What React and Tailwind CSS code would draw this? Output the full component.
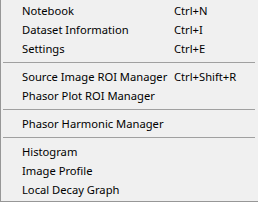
import React from 'react';

const groups = [
  [
    { label: 'Notebook', shortcut: 'Ctrl+N' },
    { label: 'Dataset Information', shortcut: 'Ctrl+I' },
    { label: 'Settings', shortcut: 'Ctrl+E' },
  ],
  [
    { label: 'Source Image ROI Manager', shortcut: 'Ctrl+Shift+R' },
    { label: 'Phasor Plot ROI Manager' },
  ],
  [{ label: 'Phasor Harmonic Manager' }],
  [
    { label: 'Histogram' },
    { label: 'Image Profile' },
    { label: 'Local Decay Graph' },
  ],
];

const MenuItem = ({ label, shortcut }) => (
  <div className="flex h-[19px] items-center pl-[21px] leading-[19px] whitespace-nowrap">
    <span className="w-[152px] shrink-0">{label}</span>
    {shortcut && <span>{shortcut}</span>}
  </div>
);

const Separator = () => (
  <div className="h-[9px] pt-[4px] pl-[2px] pr-[3px]">
    <div className="h-px bg-[#a0a0a0]"></div>
  </div>
);

export default function App() {
  return (
    <div className="w-[258px] h-[202px] bg-[#f0f0f0] border-l border-b border-[#979797] pt-px font-['Noto_Sans',sans-serif] text-[11.2px] text-black">
      {groups.map((items, gi) => (
        <React.Fragment key={gi}>
          {gi > 0 && <Separator />}
          {items.map((item) => (
            <MenuItem key={item.label} {...item} />
          ))}
        </React.Fragment>
      ))}
    </div>
  );
}
